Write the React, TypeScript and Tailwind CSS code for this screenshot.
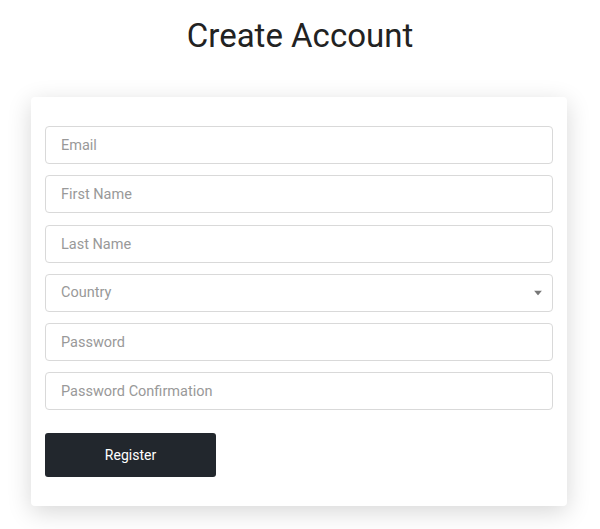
const fields = ["Email", "First Name", "Last Name"];
const fieldsAfter = ["Password", "Password Confirmation"];

function Field({ placeholder }: { placeholder: string }) {
  return (
    <input
      type="text"
      placeholder={placeholder}
      className="block h-[38px] w-full rounded-[4px] border border-[#d9d9d9] bg-white px-[15px] pt-[1px] text-[14.5px] text-[#333] outline-none placeholder:text-[#999]"
    />
  );
}

export default function App() {
  return (
    <div className="min-h-[529px] bg-white pt-[16px] font-['Roboto',sans-serif]">
      <h1 className="text-center text-[33px] leading-[40px] font-normal text-[#222]">
        Create Account
      </h1>

      <div className="mr-[33px] ml-[31px] mt-[41px] rounded-[4px] bg-white px-[14px] pt-[29px] pb-[29px] shadow-[0_6px_24px_rgba(0,0,0,0.16)]">
        <form className="flex flex-col gap-[11.25px]" onSubmit={(e) => e.preventDefault()}>
          {fields.map((f) => (
            <Field key={f} placeholder={f} />
          ))}

          {/* Country select */}
          <div className="relative">
            <select
              defaultValue=""
              className="block h-[38px] w-full appearance-none rounded-[4px] border border-[#d9d9d9] bg-white px-[15px] pt-[1px] text-[14.5px] text-[#999] outline-none"
            >
              <option value="" disabled>
                Country
              </option>
            </select>
            <svg
              width="8"
              height="5"
              viewBox="0 0 8 5"
              className="pointer-events-none absolute top-1/2 right-[11px] -translate-y-1/2"
            >
              <path d="M0 0h8L4 5z" fill="#777" />
            </svg>
          </div>

          {fieldsAfter.map((f) => (
            <Field key={f} placeholder={f} />
          ))}

          <button
            type="submit"
            className="mt-[11.75px] h-[44px] w-[171px] rounded-[3px] bg-[#22272d] text-[14px] text-white"
          >
            Register
          </button>
        </form>
      </div>
    </div>
  );
}
